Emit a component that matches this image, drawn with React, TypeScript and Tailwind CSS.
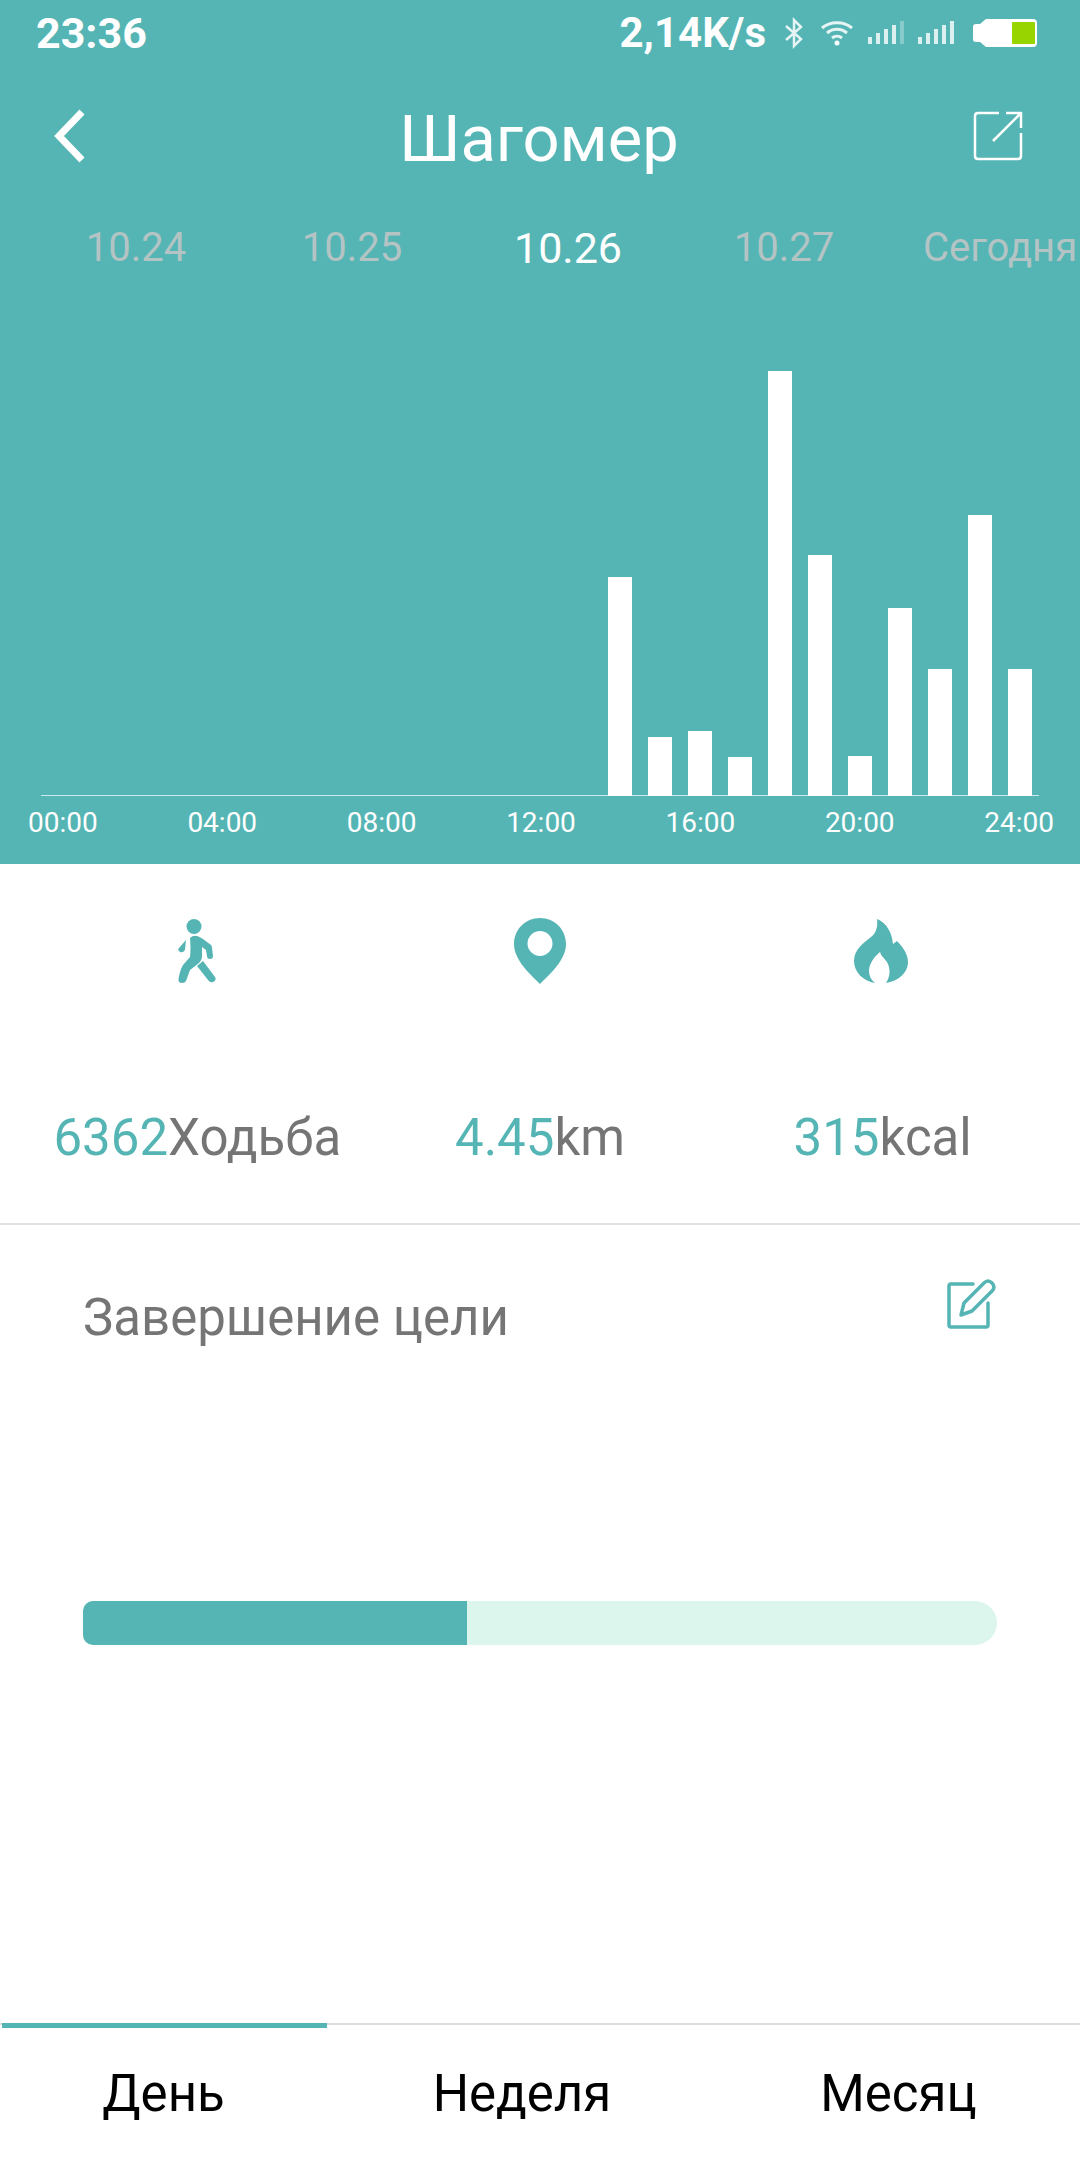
import React from 'react';

const bars = [219, 59, 65, 39, 425, 241, 40, 188, 127, 281, 127];
const ticks = ['00:00', '04:00', '08:00', '12:00', '16:00', '20:00', '24:00'];

const dates = [
  { label: '10.24', active: false },
  { label: '10.25', active: false },
  { label: '10.26', active: true },
  { label: '10.27', active: false },
  { label: 'Сегодня', active: false },
];

const SignalIcon = ({ dim }: { dim?: boolean }) => (
  <svg width="36" height="24" viewBox="0 0 36 24" fill="#ffffff">
    <rect x="0" y="16" width="4" height="7" opacity="0.8" />
    <rect x="8" y="12" width="4" height="11" opacity="0.8" />
    <rect x="16" y="8" width="4" height="15" opacity="0.8" />
    <rect x="24" y="4" width="4" height="19" opacity="0.8" />
    <rect x="32" y="0" width="4" height="23" opacity={dim ? 0.3 : 0.8} />
  </svg>
);

const StatusBar = () => (
  <div className="h-[66px] flex items-center justify-between pl-[36px] pr-[42px] text-white font-bold">
    <span className="text-[43px] leading-none">23:36</span>
    <div className="flex items-center">
      <span className="text-[42px] leading-none">2,14K/s</span>
      <svg className="ml-[18px]" width="20" height="32" viewBox="0 0 20 32" fill="none" stroke="#ffffff" strokeOpacity="0.85" strokeWidth="2.5">
        <path d="M2 9 L17 22 L10 29 V3 L17 10 L2 23" />
      </svg>
      <svg className="ml-[16px]" width="34" height="26" viewBox="0 0 34 26" fill="none" stroke="#ffffff" strokeOpacity="0.85" strokeWidth="3">
        <path d="M2 8 C10 1 24 1 32 8" />
        <path d="M7 13 C13 8 21 8 27 13" />
        <path d="M12 18 C15 15.5 19 15.5 22 18" />
        <circle cx="17" cy="23" r="2.5" fill="#ffffff" stroke="none" />
      </svg>
      <span className="ml-[14px] flex">
        <SignalIcon dim />
      </span>
      <span className="ml-[14px] flex">
        <SignalIcon />
      </span>
      <svg className="ml-[18px]" width="66" height="30" viewBox="0 0 66 30">
        <path d="M14 1 H61 Q65 1 65 5 V25 Q65 29 61 29 H14 L8 24 H4 Q1 24 1 21 V9 Q1 6 4 6 H8 Z" fill="#ffffff" />
        <rect x="40" y="4" width="23" height="22" rx="1" fill="#97d400" />
      </svg>
    </div>
  </div>
);

const TitleBar = () => (
  <div className="h-[140px] flex items-center justify-between pl-[53px] pr-[57px] text-white">
    <svg width="32" height="54" viewBox="0 0 32 54" fill="none" stroke="#ffffff" strokeWidth="7">
      <path d="M29 3 L6 27 L29 51" />
    </svg>
    <h1 className="text-[65px] font-normal leading-none ml-[20px] mt-[6px]">Шагомер</h1>
    <svg width="50" height="50" viewBox="0 0 50 50" fill="none" stroke="#ffffff" strokeWidth="2.5" strokeLinejoin="round">
      <path d="M26 2 H5 Q2 2 2 5 V45 Q2 48 5 48 H45 Q48 48 48 45 V22" />
      <path d="M20 30 L47 3 M33 2 H48 V17" />
    </svg>
  </div>
);

const Chart = () => (
  <div className="flex flex-col">
    <div className="h-[508px] shrink-0 mx-[41px] border-b border-white/70 flex items-end justify-end gap-[16px] pr-[7px]">
      {bars.map((height, i) => (
        <div key={i} className="w-[24px] bg-white -mb-px" style={{ height }} />
      ))}
    </div>
    <div className="shrink-0 flex justify-between pl-[28px] pr-[26px] pt-[10px] text-[28px] leading-[34px] text-white">
      {ticks.map((tick) => (
        <span key={tick}>{tick}</span>
      ))}
    </div>
  </div>
);

const WalkIcon = () => (
  <svg width="38" height="64" viewBox="0 0 38 64" fill="#55b5b4">
    <circle cx="16" cy="7.5" r="7.5" />
    <path d="M12 19 Q15 16 19 17 Q22 18 25 20 L33 26 Q34 27 34 29 L35 37 Q35 40 32 40 Q29 40 29 37 L28 31 L24 28 L24 38 Q24 41 21 44 L12 51 L8 62 Q7 64 4 64 Q0 64 0.5 60 Q2 51 5 46 L12 38 Q13 30 12 19 Z" />
    <path d="M8 21 L7 31 Q5 34 2 33 Q-1 31 1 29 Z" />
    <path d="M19 47 L25 42 L37 58 Q39 61 35 63 Q32 64 30 61 Z" />
  </svg>
);

const PinIcon = () => (
  <svg width="52" height="66" viewBox="0 0 52 66">
    <path
      fillRule="evenodd"
      fill="#55b5b4"
      d="M26 0 C11 0 0 12 0 26 C0 42 16 56 26 66 C36 56 52 42 52 26 C52 12 41 0 26 0 Z M26 13 A12.5 12.5 0 1 1 26 38 A12.5 12.5 0 1 1 26 13 Z"
    />
  </svg>
);

const FlameIcon = () => (
  <svg className="-ml-[3px]" width="54" height="64" viewBox="0 0 54 64">
    <path
      fill="#55b5b4"
      d="M23 0 C33 4 38 14 39 25 L43 22 C50 29 54 36 54 43 C54 54 44 62 32 64 C36 58 37 50 33 43 C30 39 27 37 26 33 C20 38 15 45 15 52 C15 57 17 61 21 64 C9 62 0 53 0 42 C0 30 10 24 17 18 C22 14 24 8 23 0 Z"
    />
  </svg>
);

const EditIcon = () => (
  <svg width="50" height="50" viewBox="0 0 50 50" fill="none" stroke="#55b5b4" strokeWidth="3.5" strokeLinejoin="round" strokeLinecap="round">
    <path d="M26 5 H4 Q2 5 2 7 V46 Q2 48 4 48 H39 Q41 48 41 46 V24" />
    <path d="M14 36 L17 24 L37 4 Q41 0 45 4 Q49 8 45 12 L25 32 Z" />
  </svg>
);

const stats = [
  { icon: <WalkIcon />, value: '6362', unit: 'Ходьба' },
  { icon: <PinIcon />, value: '4.45', unit: 'km' },
  { icon: <FlameIcon />, value: '315', unit: 'kcal' },
];

const tabs = [
  { label: 'День', active: true },
  { label: 'Неделя', active: false },
  { label: 'Месяц', active: false },
];

const App = (): React.ReactElement => {
  return (
    <div className="w-[1080px] h-[2160px] flex flex-col bg-white overflow-hidden font-['Roboto',sans-serif]">
      <header className="h-[864px] shrink-0 bg-[#55b5b4] flex flex-col">
        <StatusBar />
        <TitleBar />
        <div className="h-[82px] grid grid-cols-[216px_216px_216px_216px_216px] pl-[28px] pt-[2px] items-center text-[40px] whitespace-nowrap">
          {dates.map((date) => (
            <span
              key={date.label}
              className={date.active ? 'text-center text-[43px] text-white' : 'text-center text-[#b4c4c4]'}
            >
              {date.label}
            </span>
          ))}
        </div>
        <Chart />
      </header>

      <section className="h-[361px] shrink-0 border-b-2 border-[#e2e2e2] grid grid-cols-3 px-[26px] pt-[54px]">
        {stats.map((stat) => (
          <div key={stat.unit} className="flex flex-col items-center">
            <div className="h-[66px] flex items-center">{stat.icon}</div>
            <div className="mt-[125px] text-[51px] leading-[58px] text-[#757575] whitespace-nowrap">
              <span className="text-[#55b5b4]">{stat.value}</span>
              {stat.unit}
            </div>
          </div>
        ))}
      </section>

      <section className="flex-1 px-[83px] pt-[54px]">
        <div className="flex justify-between items-start">
          <h2 className="text-[51px] font-normal leading-[56px] text-[#757575] mt-[11px]">Завершение цели</h2>
          <EditIcon />
        </div>
        <div className="mt-[255px] h-[44px] w-[914px] rounded-l-[10px] rounded-r-[22px] bg-[#dcf6ed] overflow-hidden">
          <div className="h-full w-[384px] bg-[#55b5b4]" />
        </div>
      </section>

      <nav className="h-[137px] shrink-0 border-t-2 border-[#dddddd] grid grid-cols-[327px_390px_363px] text-[51px] text-black">
        {tabs.map((tab) => (
          <div key={tab.label} className="flex flex-col items-center">
            <div className={tab.active ? 'h-[5px] w-[325px] ml-[2px] -mt-[2px] bg-[#55b5b4]' : 'h-[5px] -mt-[2px]'} />
            <span className="mt-[38px] leading-[56px]">{tab.label}</span>
          </div>
        ))}
      </nav>
    </div>
  );
};

export default App;
